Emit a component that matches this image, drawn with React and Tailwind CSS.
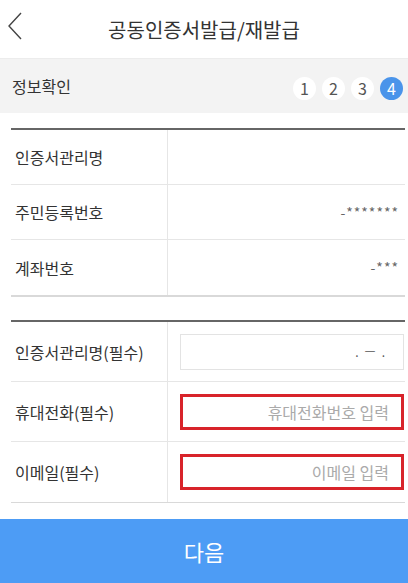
import React from "react";

const font = { fontFamily: '"Noto Sans CJK KR", "Noto Sans", sans-serif' };

function Step({ n, active }) {
  return (
    <div
      className={
        "w-[23px] h-[23px] rounded-full flex items-center justify-center text-[16px] leading-none " +
        (active ? "bg-[#4a94ea] text-white" : "bg-white text-[#555]")
      }
    >
      {n}
    </div>
  );
}

function InfoRow({ label, value, last }) {
  return (
    <div className={"flex h-[55px] " + (last ? "" : "border-b border-[#e6e6e6]")}>
      <div className="w-[157px] flex items-center pl-[4px] text-[16px] text-[#333] border-r border-[#e6e6e6]">
        {label}
      </div>
      <div className="flex-1 flex items-center justify-end pr-[6px] text-[14px] text-[#666] tracking-[1px]">
        {value}
      </div>
    </div>
  );
}

function InputRow({ label, placeholder, red, last }) {
  return (
    <div className={"flex h-[60px] " + (last ? "" : "border-b border-[#e6e6e6]")}>
      <div className="w-[157px] flex items-center pl-[4px] text-[16px] text-[#333] border-r border-[#e6e6e6]">
        {label}
      </div>
      <div className="flex-1 flex items-center pl-[12px] pr-[1px]">
        <div
          className={
            "w-full h-[36px] flex items-center justify-end pr-[12px] text-[16px] text-[#aaa] " +
            (red ? "border-[3px] border-[#d8232a]" : "border border-[#e3e3e3]")
          }
        >
          {placeholder}
        </div>
      </div>
    </div>
  );
}

export default function App() {
  return (
    <div className="w-[408px] h-[583px] bg-white flex flex-col overflow-hidden" style={font}>
      {/* header */}
      <div className="relative h-[59px] flex items-center justify-center border-b border-[#ececec]">
        <svg className="absolute left-[7px] top-[12px]" width="16" height="28" viewBox="0 0 16 28">
          <path d="M14 1 L2 14 L14 27" fill="none" stroke="#444" strokeWidth="1.4" />
        </svg>
        <div className="text-[20px] text-[#333] pt-[1px]">공동인증서발급/재발급</div>
      </div>

      {/* step bar */}
      <div className="h-[54px] bg-[#f3f3f3] flex items-center justify-between pl-[12px] pr-[5px]">
        <div className="text-[16px] text-[#333]">정보확인</div>
        <div className="flex gap-[6px] pt-[4px]">
          <Step n="1" />
          <Step n="2" />
          <Step n="3" />
          <Step n="4" active />
        </div>
      </div>

      {/* info table */}
      <div className="mt-[15px] ml-[11px] mr-[3px] border-t-2 border-t-[#666] border-b-2 border-b-[#d9d9d9]">
        <InfoRow label="인증서관리명" value="" />
        <InfoRow label="주민등록번호" value="-*******" />
        <InfoRow label="계좌번호" value="-***" last />
      </div>

      {/* input table */}
      <div className="mt-[23px] ml-[11px] mr-[3px] border-t-2 border-t-[#666] border-b border-b-[#d9d9d9]">
        <InputRow label="인증서관리명(필수)" placeholder={<span className="text-[#555] text-[12px] tracking-[6px]">.ㅡ.</span>} />
        <InputRow label="휴대전화(필수)" placeholder="휴대전화번호 입력" red />
        <InputRow label="이메일(필수)" placeholder="이메일 입력" red last />
      </div>

      {/* next button */}
      <div className="mt-auto h-[64px] bg-[#4d9cf5] flex items-center justify-center text-white text-[22px]">
        다음
      </div>
    </div>
  );
}
